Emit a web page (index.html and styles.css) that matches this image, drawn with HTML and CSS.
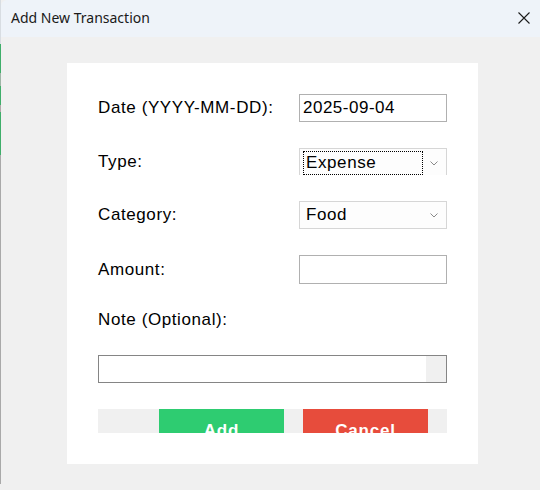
FILE: index.html
```html
<!DOCTYPE html>
<html>
<head>
<meta charset="utf-8">
<link rel="stylesheet" href="styles.css">
</head>
<body>
<div class="window">
  <div class="edge"></div>
  <div class="main">
    <div class="titlebar">
      <span class="title">Add New Transaction</span>
      <svg class="close" width="12" height="12" viewBox="0 0 12 12"><path d="M0.5 0.5 L11.5 11.5 M11.5 0.5 L0.5 11.5" stroke="#1b1b1b" stroke-width="1.1" fill="none"/></svg>
    </div>
    <div class="content">
      <div class="panel">
        <div class="row r-date">
          <span class="label">Date (YYYY-MM-DD):</span>
          <div class="entry"><span class="val">2025-09-04</span></div>
        </div>
        <div class="row r-type">
          <span class="label">Type:</span>
          <div class="combo open">
            <span class="focus">Expense</span>
            <svg class="chev" width="8" height="5" viewBox="0 0 8 5"><path d="M0.5 0.5 L4 4 L7.5 0.5" stroke="#8a8a8a" fill="none"/></svg>
          </div>
        </div>
        <div class="row r-cat">
          <span class="label">Category:</span>
          <div class="combo">
            <span class="cval">Food</span>
            <svg class="chev" width="8" height="5" viewBox="0 0 8 5"><path d="M0.5 0.5 L4 4 L7.5 0.5" stroke="#8a8a8a" fill="none"/></svg>
          </div>
        </div>
        <div class="row r-amt">
          <span class="label">Amount:</span>
          <div class="entry tall"></div>
        </div>
        <div class="note-label label">Note (Optional):</div>
        <div class="note-entry"><div class="note-field"></div><div class="note-side"></div></div>
        <div class="buttons">
          <div class="btn add">Add</div>
          <div class="btn cancel">Cancel</div>
        </div>
      </div>
    </div>
  </div>
</div>
</body>
</html>
```
FILE: styles.css
```css
html, body {
  margin: 0;
  padding: 0;
}
body {
  width: 540px;
  height: 490px;
  overflow: hidden;
  background: #f0f0f0;
  font-family: "Liberation Sans", Arial, sans-serif;
  color: #000;
}
.window {
  display: flex;
  height: 490px;
}
.edge {
  width: 1px;
  flex: none;
  background: linear-gradient(to bottom,
    #d8dde2 0px, #d8dde2 44px,
    #3fae6a 44px, #3fae6a 73px,
    #9fb5a6 73px, #9fb5a6 86px,
    #3fae6a 86px, #3fae6a 105px,
    #b0a8a8 105px, #b0a8a8 112px,
    #3fae6a 112px, #3fae6a 155px,
    #a9a9a9 155px, #a9a9a9 484px,
    #f0f0f0 484px);
}
.main {
  flex: 1;
  display: flex;
  flex-direction: column;
}
.titlebar {
  height: 37px;
  flex: none;
  background: #eef3f9;
  display: flex;
  align-items: center;
  justify-content: space-between;
  padding: 0 10px 0 10px;
  border-top-left-radius: 6px;
}
.title {
  font-family: "Noto Sans", "Open Sans", sans-serif;
  font-size: 14px;
  color: #1a1a1a;
  position: relative;
  top: -1px;
}
.close {
  display: block;
  margin-top: -1px;
}
.content {
  padding: 26px 0 0 66px;
}
.panel {
  width: 349px;
  height: 339px;
  background: #fff;
  padding: 31px 31px 31px 31px;
  display: flex;
  flex-direction: column;
}
.label {
  font-size: 17px;
  letter-spacing: 0.6px;
  line-height: 20px;
  white-space: nowrap;
}
.row {
  display: grid;
  grid-template-columns: 201px 148px;
  align-items: center;
}
.r-type { margin-top: 26px; }
.r-cat { margin-top: 26px; }
.r-amt { margin-top: 26px; }
.entry {
  box-sizing: border-box;
  height: 28px;
  border: 1px solid #b0b0b0;
  background: #fff;
  display: flex;
  align-items: center;
  padding-left: 3px;
}
.entry.tall { height: 29px; }
.val {
  font-size: 17px;
  letter-spacing: 0.5px;
  line-height: 20px;
}
.combo {
  box-sizing: border-box;
  height: 28px;
  border: 1px solid #d6d6d6;
  background: #fdfdfd;
  display: flex;
  align-items: center;
  justify-content: space-between;
  padding: 0 8px 0 6px;
}
.combo.open {
  height: 27px;
  border-bottom: none;
  padding: 2px 8px 0 3px;
  align-items: stretch;
}
.focus {
  flex: none;
  width: 120px;
  box-sizing: border-box;
  border: 1px dotted #000;
  font-size: 17px;
  letter-spacing: 0.6px;
  line-height: 21px;
  padding-left: 2px;
}
.combo.open .chev { align-self: center; }
.cval {
  font-size: 17px;
  letter-spacing: 0.6px;
  line-height: 20px;
}
.chev { display: block; }
.note-label {
  margin-top: 26px;
}
.note-entry {
  margin-top: 25px;
  box-sizing: border-box;
  height: 28px;
  border: 1px solid #858585;
  display: flex;
}
.note-field {
  flex: 1;
  background: #fff;
}
.note-side {
  width: 20px;
  background: #f0f0f0;
}
.buttons {
  margin-top: 26px;
  height: 24px;
  overflow: hidden;
  background: #f0f0f0;
  display: flex;
  justify-content: flex-start;
  padding-left: 61px;
  gap: 19px;
}
.btn {
  width: 125px;
  height: 40px;
  box-sizing: border-box;
  padding-top: 12px;
  text-align: center;
  color: #fff;
  font-weight: bold;
  font-size: 17px;
  letter-spacing: 0.8px;
  line-height: 20px;
}
.add { background: #2ecc71; }
.cancel { background: #e74c3c; }
```
